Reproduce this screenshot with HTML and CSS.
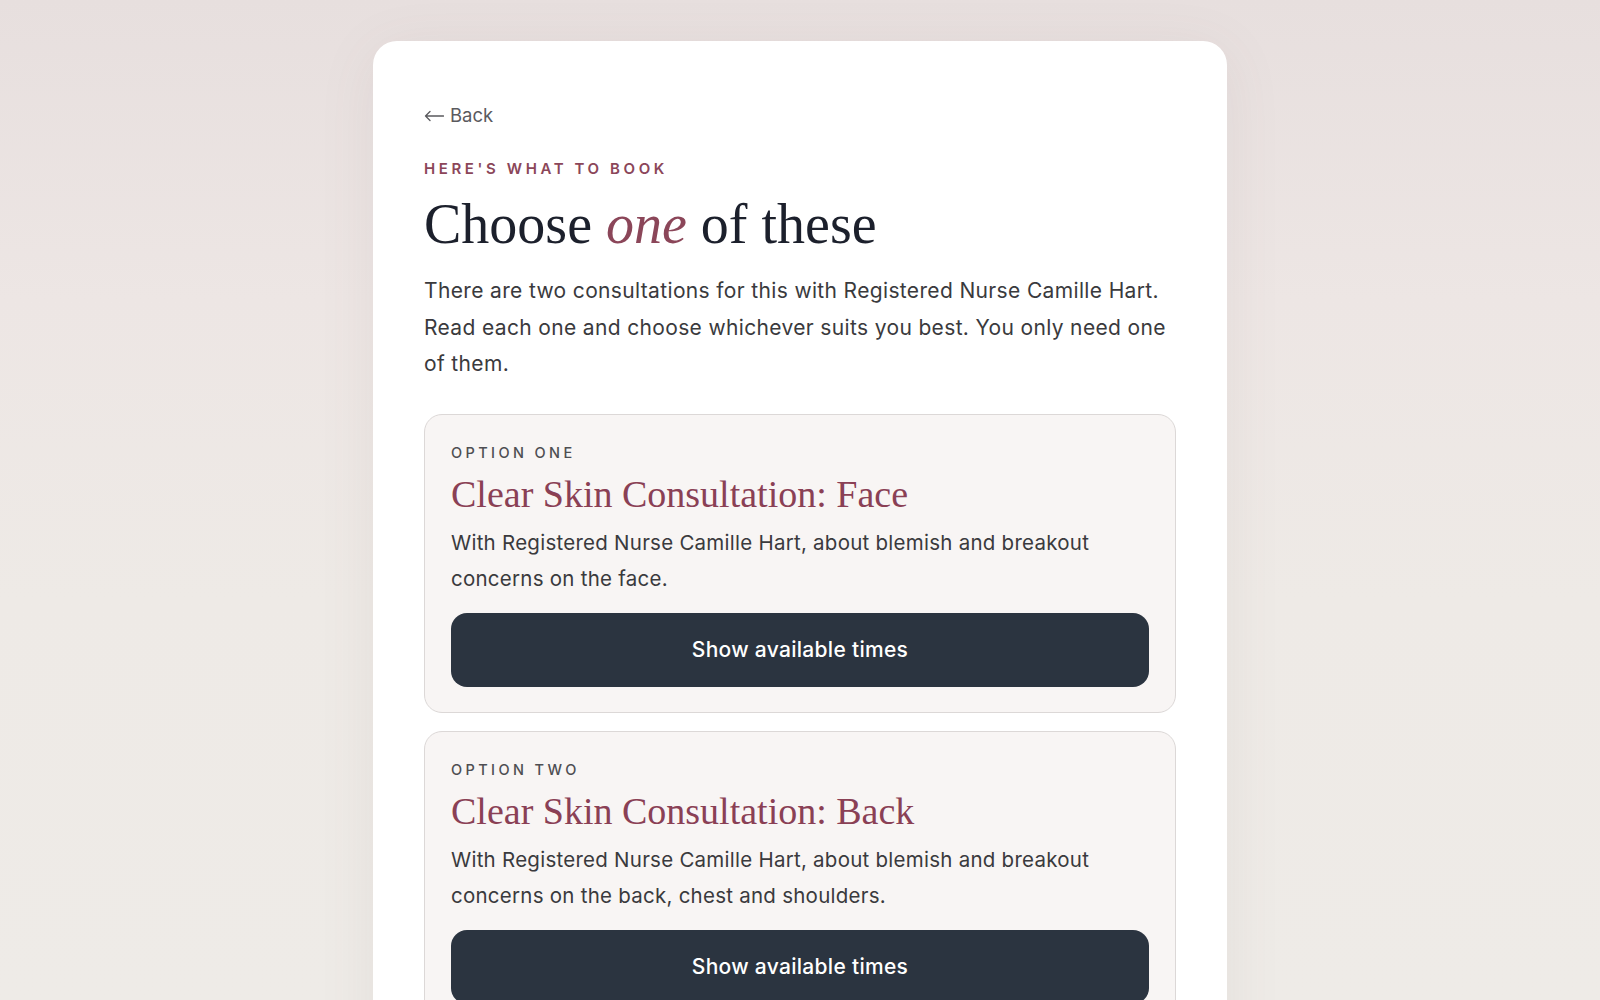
FILE: index.html
```html
<!DOCTYPE html>
<html lang="en">
<head>
<meta charset="utf-8">
<title>Choose one of these</title>
<link rel="stylesheet" href="styles.css">
</head>
<body>
<main class="page">
  <section class="panel">
    <a class="back" href="#"><svg class="arrow" width="20" height="12" viewBox="0 0 20 12" aria-hidden="true"><path d="M19.5 6H1.5M6 1.5L1.5 6L6 10.5" fill="none" stroke="currentColor" stroke-width="1.3" stroke-linecap="round" stroke-linejoin="round"/></svg><span>Back</span></a>
    <p class="eyebrow">HERE'S WHAT TO BOOK</p>
    <h1 class="title">Choose <em>one</em> of these</h1>
    <p class="intro">There are two consultations for this with Registered Nurse Camille Hart. Read each one and choose whichever suits you best. You only need one of them.</p>
    <div class="options">
      <article class="option">
        <p class="option-label">OPTION ONE</p>
        <h2 class="option-title">Clear Skin Consultation: Face</h2>
        <p class="option-desc">With Registered Nurse Camille Hart, about blemish and breakout concerns on the face.</p>
        <button class="btn" type="button">Show available times</button>
      </article>
      <article class="option">
        <p class="option-label">OPTION TWO</p>
        <h2 class="option-title">Clear Skin Consultation: Back</h2>
        <p class="option-desc">With Registered Nurse Camille Hart, about blemish and breakout concerns on the back, chest and shoulders.</p>
        <button class="btn" type="button">Show available times</button>
      </article>
    </div>
  </section>
</main>
</body>
</html>
```

FILE: styles.css
```css
* { box-sizing: border-box; }

html, body {
  margin: 0;
  height: 100%;
}

body {
  background: linear-gradient(180deg, #e7dfde 0%, #ede6e4 30%, #eeeae6 60%, #eeebe7 100%);
  font-family: "Inter", "Open Sans", sans-serif;
  color: #38383b;
  overflow: hidden;
}

.page {
  padding-top: 41px;
  display: flex;
  justify-content: center;
}

.panel {
  width: 854px;
  background: #ffffff;
  border-radius: 24px;
  padding: 62px 51px 60px;
  box-shadow: 0 10px 60px rgba(120, 95, 90, 0.08);
  min-height: 1000px;
}

.back {
  display: inline-flex;
  align-items: center;
  gap: 6px;
  font-size: 18.5px;
  line-height: 24px;
  color: #5a5a5e;
  text-decoration: none;
}

.back .arrow {
  display: block;
  margin-top: 1px;
}

.eyebrow {
  margin: 32px 0 0;
  font-size: 15px;
  line-height: 20px;
  font-weight: 600;
  letter-spacing: 3.6px;
  color: #8b4659;
}

.title {
  margin: 14px 0 0;
  font-family: "Liberation Serif", "Times New Roman", serif;
  font-weight: 400;
  font-size: 56px;
  line-height: 62px;
  color: #1c202c;
}

.title em {
  color: #8b4659;
  font-style: italic;
}

.intro {
  margin: 18px 0 0;
  font-size: 21px;
  line-height: 36.5px;
  letter-spacing: 0.35px;
  color: #3a3a3d;
}

.options {
  margin-top: 31px;
  display: flex;
  flex-direction: column;
  gap: 18px;
}

.option {
  background: #f8f5f4;
  border: 1.5px solid #dcd8d7;
  border-radius: 18px;
  padding: 29px 26px 25px;
}

.option-label {
  margin: 0;
  font-size: 14.5px;
  line-height: 18px;
  font-weight: 500;
  letter-spacing: 3.4px;
  color: #4e4e52;
}

.option-title {
  margin: 10px 0 0;
  font-family: "Liberation Serif", "Times New Roman", serif;
  font-weight: 400;
  font-size: 38px;
  line-height: 44px;
  color: #8a4055;
}

.option-desc {
  margin: 9px 0 0;
  font-size: 20.5px;
  line-height: 36px;
  letter-spacing: 0.25px;
  color: #3a3a3d;
}

.btn {
  display: block;
  width: 100%;
  margin-top: 16px;
  height: 74px;
  border: 0;
  border-radius: 16px;
  background: #2b3440;
  color: #ffffff;
  font-family: "Inter", "Open Sans", sans-serif;
  font-size: 21px;
  letter-spacing: 0.3px;
  font-weight: 500;
  cursor: pointer;
}
```
